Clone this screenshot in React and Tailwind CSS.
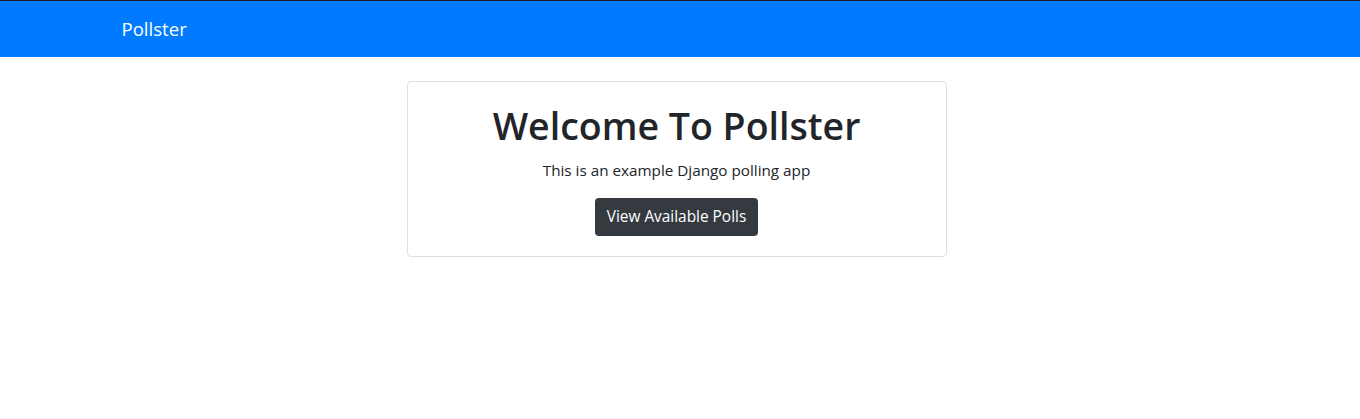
export default function App() {
  return (
    <div className="min-h-screen bg-white text-[#212529]" style={{ fontFamily: '"Open Sans", "Noto Sans", sans-serif' }}>
      {/* Navbar */}
      <nav className="border-t border-[#1b1f23] bg-[#007bff]">
        <div className="w-[1353px]">
          <div className="mx-auto w-[1140px] px-[15px] py-2">
            <a href="#" className="inline-block py-[5px] text-[18.6px] leading-[30px] text-white">
              Pollster
            </a>
          </div>
        </div>
      </nav>

      {/* Welcome card */}
      <div className="w-[1353px] pt-6">
        <div className="mx-auto w-[540px] rounded border border-[#dfdfdf] p-5 text-center">
          <h1 className="mb-2 text-[37.5px] font-semibold leading-[48px]">Welcome To Pollster</h1>
          <p className="mb-4 text-[15.25px] leading-6">This is an example Django polling app</p>
          <a
            href="#"
            className="inline-block rounded bg-[#343a40] px-3 py-[7px] text-[15.4px] leading-6 text-white"
          >
            View Available Polls
          </a>
        </div>
      </div>
    </div>
  )
}
